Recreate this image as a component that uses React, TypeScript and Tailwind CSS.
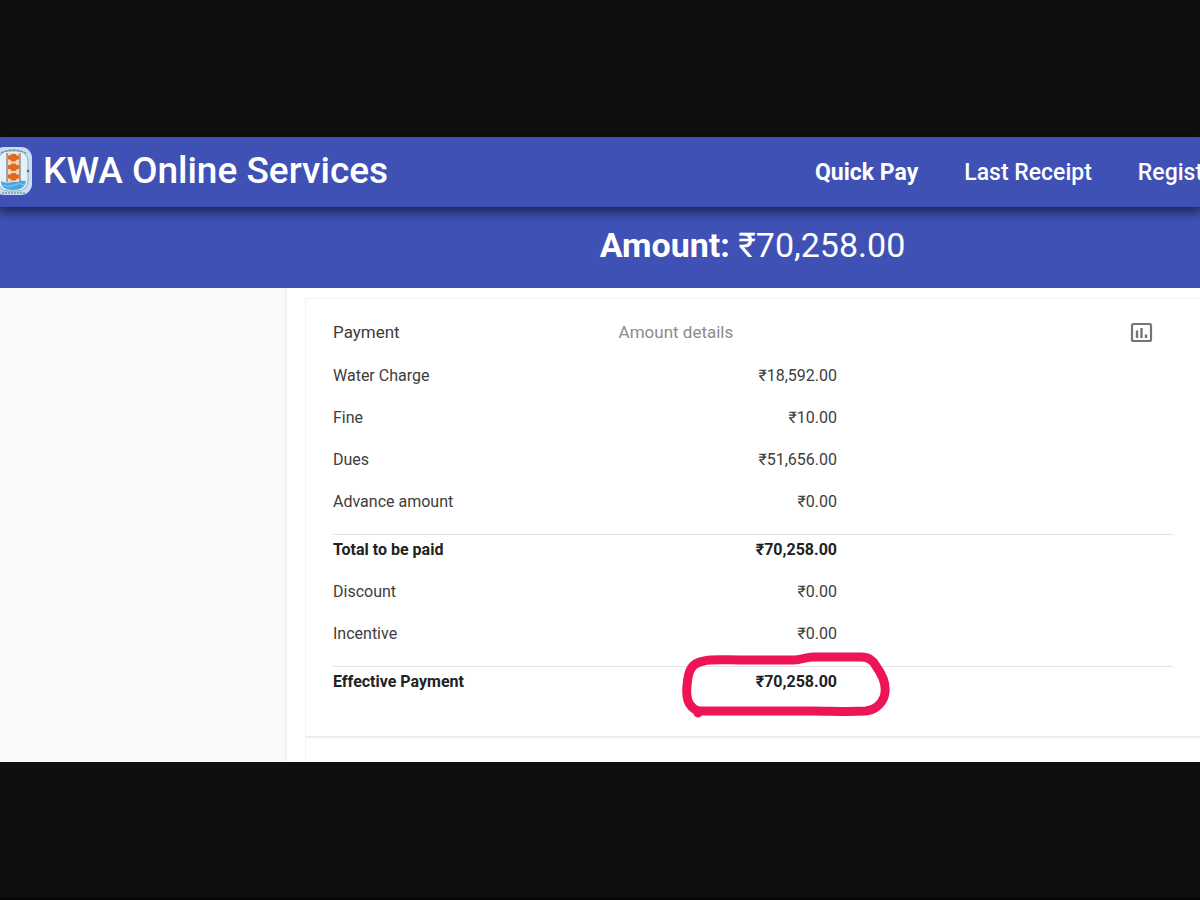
import clsx from 'clsx'

interface Charge {
  label: string
  amount: string
  total?: boolean
  last?: boolean
  circled?: boolean
}

const charges: Charge[] = [
  { label: 'Water Charge', amount: '₹18,592.00' },
  { label: 'Fine', amount: '₹10.00' },
  { label: 'Dues', amount: '₹51,656.00' },
  { label: 'Advance amount', amount: '₹0.00', last: true },
  { label: 'Total to be paid', amount: '₹70,258.00', total: true },
  { label: 'Discount', amount: '₹0.00' },
  { label: 'Incentive', amount: '₹0.00', last: true },
  { label: 'Effective Payment', amount: '₹70,258.00', total: true, circled: true },
]

function Logo() {
  return (
    <svg className="h-12 w-[33px] shrink-0" viewBox="0 0 33 48" aria-hidden="true">
      <rect x="-7" y="0" width="39" height="48" rx="11" fill="#c9def5" />
      <rect x="-2" y="4" width="30" height="40" rx="10" fill="#e4f1f6" stroke="#8fabc0" strokeWidth="1" />
      <path d="M1 6Q13 0 26 6" fill="none" stroke="#6f9a9a" strokeWidth="1.5" strokeDasharray="3 1" />
      <path d="M1 34Q5 37 13 35T26 34Q25 43 13 43T1 34Z" fill="#4aa5e0" />
      <path d="M3 38Q8 41 14 38T24 38" fill="none" stroke="#8bcdf0" strokeWidth="1" />
      <rect x="7" y="6" width="13" height="29" fill="#f6d5b8" />
      <path d="M7 6V35M20 6V35" stroke="#7b7186" strokeWidth="1.2" />
      <g fill="#e06a24">
        <path d="M11.5 7h4l1 1.5h2.5v4h-2l-1.5 2h-4l-1.5-2h-2v-4h2.5z" />
        <path d="M11.5 16.5h4l1 1.5h2.5v4h-2l-1.5 2h-4l-1.5-2h-2v-4h2.5z" />
        <path d="M11.5 26h4l1 1.5h2.5v4h-2l-1.5 2h-4l-1.5-2h-2v-4h2.5z" />
      </g>
      <circle cx="28" cy="24" r="1.3" fill="#526b92" />
      <path d="M2 46H25" stroke="#8198a6" strokeWidth="1.5" strokeDasharray="2 1" />
    </svg>
  )
}

function ChartIcon() {
  return (
    <svg className="size-6" viewBox="0 0 24 24" fill="none" stroke="#757575" aria-hidden="true">
      <rect x="3" y="4" width="19" height="17" rx="1.5" strokeWidth="2.2" />
      <path d="M8 10.5V18M12.5 8v10M17 14.5V18" strokeWidth="2.4" />
    </svg>
  )
}

function RedMarker() {
  return (
    <svg
      className="pointer-events-none absolute -right-[54px] -top-[22px] h-[70px] w-[210px]"
      viewBox="0 0 210 70"
      fill="none"
      stroke="#ee1556"
      strokeLinecap="round"
      strokeLinejoin="round"
      aria-hidden="true"
    >
      <path
        d="M17 61C6 56 5 47 6 36C7 21 10 13 23 11C30 9 42 10 60 10H113C120 10 125 7 132 7H181C188 7 192 10 195 16C203 27 206 38 203 47C200 55 193 60 185 61C165 62 150 61 130 61H18L17 63"
        strokeWidth="9"
      />
    </svg>
  )
}

export default function App() {
  return (
    <div className="flex min-h-screen flex-col overflow-hidden border-b-[3px] border-[#090606] bg-[#0f0f0f] pt-[137px] font-['Roboto',sans-serif] text-[#3d3d3d]">
      <header className="relative flex h-[70px] items-center bg-[#3f51b5] pb-0.5 text-white shadow-[0_3px_10px_2px_rgba(0,0,0,0.55)]">
        <Logo />
        <h1 className="flex-1 whitespace-nowrap pl-[10px] text-[37px] font-medium">KWA Online Services</h1>
        <nav className="flex w-[385px] gap-[46px] overflow-hidden whitespace-nowrap pt-1 text-[23px] font-medium">
          <a href="#quick-pay" className="font-bold">
            Quick Pay
          </a>
          <a href="#last-receipt">Last Receipt</a>
          <a href="#register">Register</a>
        </nav>
      </header>

      <div className="flex h-[81px] items-center justify-center bg-[#3f51b5] pb-1 pl-[305px] text-[34px] text-white">
        <p>
          <strong className="font-bold">Amount:</strong> ₹70,258.00
        </p>
      </div>

      <div className="flex bg-white">
        <aside className="w-[287px] shrink-0 border-r-2 border-[#f1f1f1] bg-[#fafafa]" />
        <main className="flex-1 pl-[18px] pt-[10px]">
          <section className="border-l border-t border-[#f3f3f3] pb-6">
            <div className="border-b-2 border-[#eeeeee] px-[27px] pb-[33px] pt-[10px]">
              <table className="w-full table-fixed border-separate border-spacing-0 text-left text-base leading-5">
                <thead>
                  <tr className="h-[46px] text-[17px]">
                    <th className="w-[34%] font-normal">Payment</th>
                    <th className="w-[26%] font-normal text-[#8c8c8c]">Amount details</th>
                    <th className="pr-5 text-right">
                      <button type="button" aria-label="Chart" className="align-middle">
                        <ChartIcon />
                      </button>
                    </th>
                  </tr>
                </thead>
                <tbody>
                  {charges.map((charge) => {
                    const cell = clsx(
                      charge.total ? 'border-t border-[#e3e3e3] pt-[5px] font-bold text-[#222222]' : 'pt-[11px]',
                      charge.last ? 'pb-[22px]' : 'pb-[11px]',
                    )

                    return (
                      <tr key={charge.label}>
                        <td className={cell}>{charge.label}</td>
                        <td className={clsx(cell, 'text-right')}>
                          <span className="relative inline-block">
                            {charge.amount}
                            {charge.circled && <RedMarker />}
                          </span>
                        </td>
                        <td className={cell} />
                      </tr>
                    )
                  })}
                </tbody>
              </table>
            </div>
          </section>
        </main>
      </div>
    </div>
  )
}
